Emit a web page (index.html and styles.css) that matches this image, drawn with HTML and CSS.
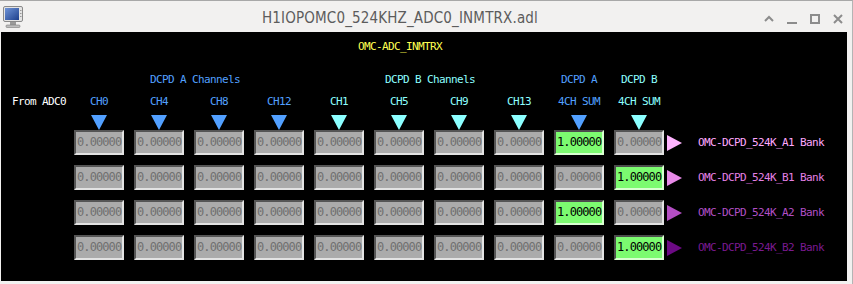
FILE: index.html
```html
<!DOCTYPE html>
<html lang="en">
<head>
    <meta charset="UTF-8">
    <title>H1IOPOMC0_524KHZ_ADC0_INMTRX.adl</title>
    <link rel="stylesheet" href="styles.css">
</head>
<body>
    <div class="window">
        <div class="titlebar">
            <svg class="app-icon" width="20" height="22" viewBox="0 0 20 22">
                <defs>
                    <linearGradient id="scr" x1="0" y1="0" x2="1" y2="1">
                        <stop offset="0" stop-color="#6f94d8"/>
                        <stop offset="1" stop-color="#1d3f8c"/>
                    </linearGradient>
                </defs>
                <rect x="0.5" y="0.5" width="19" height="15" rx="1.5" fill="#e4e4e4" stroke="#8a8a8a"/>
                <rect x="2" y="2" width="14" height="12" fill="url(#scr)"/>
                <rect x="17" y="4" width="1.5" height="1" fill="#999"/>
                <rect x="17" y="7" width="1.5" height="1" fill="#999"/>
                <rect x="17" y="10" width="1.5" height="1" fill="#999"/>
                <rect x="7" y="16" width="6" height="3" fill="#9a9a9a"/>
                <rect x="3" y="19" width="14" height="2.5" rx="1" fill="#bdbdbd" stroke="#7a7a7a" stroke-width="0.6"/>
            </svg>
            <div class="title">H1IOPOMC0_524KHZ_ADC0_INMTRX.adl</div>
            <div class="controls">
                <svg width="12" height="12" viewBox="0 0 12 12"><path d="M2 8 L6 4 L10 8" fill="none" stroke="#8c8c8c" stroke-width="2"/></svg>
                <svg width="12" height="12" viewBox="0 0 12 12"><rect x="1" y="9" width="10" height="2" fill="#8c8c8c"/></svg>
                <svg width="12" height="12" viewBox="0 0 12 12"><rect x="2" y="2" width="8" height="8" fill="none" stroke="#8c8c8c" stroke-width="2"/></svg>
                <svg width="12" height="12" viewBox="0 0 12 12"><path d="M2 2 L10 10 M10 2 L2 10" stroke="#8c8c8c" stroke-width="2"/></svg>
            </div>
        </div>

        <div class="screen">
            <div class="panel-title">OMC-ADC_INMTRX</div>

            <div class="group group-a">DCPD A Channels</div>
            <div class="group group-b">DCPD B Channels</div>
            <div class="head col-9 blue">DCPD A</div>
            <div class="head col-10 cyan">DCPD B</div>

            <div class="from">From ADC0</div>
            <div class="head ch blue">CH0</div>
            <div class="head ch blue">CH4</div>
            <div class="head ch blue">CH8</div>
            <div class="head ch blue">CH12</div>
            <div class="head ch cyan">CH1</div>
            <div class="head ch cyan">CH5</div>
            <div class="head ch cyan">CH9</div>
            <div class="head ch cyan">CH13</div>
            <div class="head ch blue">4CH SUM</div>
            <div class="head ch cyan">4CH SUM</div>

            <div class="arrow-row">
                <span class="down blue-bg"></span>
                <span class="down blue-bg"></span>
                <span class="down blue-bg"></span>
                <span class="down blue-bg"></span>
                <span class="down cyan-bg"></span>
                <span class="down cyan-bg"></span>
                <span class="down cyan-bg"></span>
                <span class="down cyan-bg"></span>
                <span class="down blue-bg"></span>
                <span class="down cyan-bg"></span>
            </div>

            <div id="matrix" class="matrix"></div>
        </div>
    </div>

    <script>
        const banks = [
            { name: "OMC-DCPD_524K_A1 Bank", cls: "bank-1", on: 8 },
            { name: "OMC-DCPD_524K_B1 Bank", cls: "bank-2", on: 9 },
            { name: "OMC-DCPD_524K_A2 Bank", cls: "bank-3", on: 8 },
            { name: "OMC-DCPD_524K_B2 Bank", cls: "bank-4", on: 9 }
        ];

        const matrix = document.getElementById("matrix");

        banks.forEach(bank => {
            const row = document.createElement("div");
            row.className = "matrix-row";
            for (let i = 0; i < 10; i++) {
                const box = document.createElement("div");
                box.className = i === bank.on ? "cell cell-on" : "cell";
                box.textContent = i === bank.on ? "1.00000" : "0.00000";
                row.appendChild(box);
            }
            const out = document.createElement("div");
            out.className = "bank " + bank.cls;
            out.innerHTML = '<span class="right"></span><span class="bank-name"></span>';
            out.querySelector(".bank-name").textContent = bank.name;
            row.appendChild(out);
            matrix.appendChild(row);
        });
    </script>
</body>
</html>
```

FILE: styles.css
```css
/* General */
body {
    margin: 0;
    background-color: #f2f1f0;
    font-family: "DejaVu Sans Mono", monospace;
}

.window {
    width: 853px;
    height: 284px;
    box-sizing: border-box;
    border-top: 1px solid #a8a8a8;
    border-right: 1px solid #b4b4b4;
    background-color: #f2f1f0;
}

/* Title bar */
.titlebar {
    height: 31px;
    display: flex;
    align-items: center;
    padding-left: 3px;
    padding-right: 8px;
}

.app-icon {
    flex: none;
    margin-top: 1px;
}

.title {
    flex: 1;
    text-align: center;
    font-family: "DejaVu Sans Condensed", "DejaVu Sans", sans-serif;
    font-size: 15px;
    letter-spacing: 0.15px;
    color: #5c5c5c;
    padding-left: 14px;
    margin-top: 2px;
}

.controls {
    display: flex;
    gap: 11px;
    margin-top: 4px;
}

/* Black display */
.screen {
    margin-left: 1px;
    width: 846px;
    height: 249px;
    box-sizing: border-box;
    background-color: #000;
    padding-top: 9px;
    display: grid;
    grid-template-columns: 73px repeat(10, 60px) 1fr;
    grid-template-rows: 33px 22px 19px 15px auto;
    font-size: 11px;
    letter-spacing: -0.62px;
    line-height: 12px;
}

.blue { color: #52a0ff; }
.cyan { color: #8cffff; }

.panel-title {
    grid-column: 1 / -1;
    color: #ffff52;
    padding-left: 357px;
}

.group {
    grid-row: 2;
    text-align: center;
    width: 230px;
    box-sizing: border-box;
}

.group-a {
    grid-column: 2 / span 4;
    color: #52a0ff;
    padding-left: 12px;
}

.group-b {
    grid-column: 6 / span 4;
    color: #8cffff;
    padding-left: 2px;
}

.head {
    width: 50px;
    text-align: center;
    white-space: nowrap;
}

.ch { grid-row: 3; }
.col-9 { grid-row: 2; grid-column: 10; }
.col-10 { grid-row: 2; grid-column: 11; }

.from {
    grid-row: 3;
    grid-column: 1;
    color: #fff;
    padding-left: 11px;
}

.arrow-row {
    grid-row: 4;
    grid-column: 2 / -1;
    display: flex;
}

.down {
    width: 0;
    height: 0;
    margin: 0 27px 0 17px;
    border-left: 8px solid transparent;
    border-right: 8px solid transparent;
    border-top-width: 15px;
    border-top-style: solid;
}

.blue-bg { border-top-color: #52a0ff; }
.cyan-bg { border-top-color: #8cffff; }

/* Matrix */
.matrix {
    grid-row: 5;
    grid-column: 2 / -1;
    display: flex;
    flex-direction: column;
    gap: 10px;
}

.matrix-row {
    display: flex;
    gap: 10px;
    align-items: center;
}

.cell {
    width: 50px;
    height: 25px;
    box-sizing: border-box;
    border-style: solid;
    border-width: 2px;
    border-color: #555 #e2e2e2 #e2e2e2 #555;
    background-color: #ababab;
    color: #707070;
    font-size: 12px;
    letter-spacing: -0.9px;
    line-height: 21px;
    padding-left: 1px;
    overflow: hidden;
}

.cell-on {
    background-color: #7cfb70;
    color: #000;
    border-color: #4c4c4c #d8ffd0 #d8ffd0 #4c4c4c;
}

.bank {
    display: flex;
    align-items: center;
    margin-left: -7px;
}

.right {
    width: 0;
    height: 0;
    border-top: 8px solid transparent;
    border-bottom: 8px solid transparent;
    border-left-width: 15px;
    border-left-style: solid;
    margin-right: 16px;
}

.bank-name {
    white-space: nowrap;
}

.bank-1 { color: #ffa8ff; }
.bank-2 { color: #e680e6; }
.bank-3 { color: #b24fc6; }
.bank-4 { color: #7a1a90; }

.bank-1 .right { border-left-color: #ffb4ff; }
.bank-2 .right { border-left-color: #e88ae8; }
.bank-3 .right { border-left-color: #b44ec4; }
.bank-4 .right { border-left-color: #6c0a84; }
```
